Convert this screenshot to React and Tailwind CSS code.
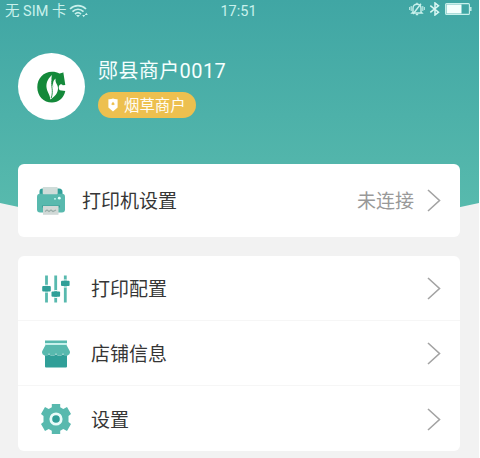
const TEAL = '#58b9ae';
const TEAL_DARK = '#309f98';

function WifiIcon() {
  return (
    <svg width="20" height="14" viewBox="0 0 20 14" fill="none" stroke="#c9f1ec" strokeWidth="1.700">
      <path d="M1 5C5.500 .6 12.500 .6 17 5" />
      <path d="M3.500 7.700C6.800 4.500 11.200 4.500 14.500 7.700" />
      <path d="M6 10.100C7.800 8.400 10.200 8.400 12 10.100" />
      <path d="M7 11L9 13.200l2-2.200z" fill="#c9f1ec" stroke="none" />
      <path d="M13.200 11l1.500 2.200 1.500-2.200zM15.800 11l1.500-2.200 1.500 2.200z" fill="#c9f1ec" stroke="none" />
    </svg>
  );
}

function MutedBellIcon() {
  return (
    <svg width="16" height="14" viewBox="0 0 16 14" fill="none" stroke="#c9f1ec" strokeWidth="1.400">
      <path d="M4 10V6.200C4 3.700 5.600 2.200 8 2.200s4 1.500 4 4V10l1 1H3z" />
      <path d="M8 .8v1.400M6.800 12.500h2.400M4 12L12 1.800" />
      <path d="M2.200 4v5M.7 5v3M13.800 4v5M15.300 5v3" strokeWidth="1" />
    </svg>
  );
}

function BluetoothIcon() {
  return (
    <svg width="12" height="14" viewBox="0 0 12 14" fill="none" stroke="#d9f7f3" strokeWidth="1.500">
      <path d="M1.300 3.700l8.200 6.500L6 13V1l3.500 2.800-8.200 6.500" />
    </svg>
  );
}

function BatteryIcon() {
  return (
    <svg width="27" height="12" viewBox="0 0 27 12" fill="none">
      <rect x=".6" y=".6" width="23.800" height="10.800" rx="1" stroke="#c9f1ec" strokeWidth="1.100" />
      <rect x="1.500" y="1.500" width="15" height="9" fill="#f4fffd" />
      <path d="M25.800 4v4" stroke="#c9f1ec" strokeWidth="1.400" />
    </svg>
  );
}

function MerchantLogo() {
  return (
    <svg width="30" height="32" viewBox="0 0 30 32">
      <path
        d="M26.300 1.200L28.300 14L25.800 14.300C24.800 12.800 23.200 13 22.200 14.500C21.400 16.300 21.600 18 22.800 19.300L28.300 20C26.500 27.500 21.500 31.500 15 31.500C6.500 31.500.3 25 .3 16.200S6.500.7 15 .7C18 .7 20.500 1.300 22.300 2.400C23.800 2.500 25 1.900 26.300 1.200z"
        fill="#14893a"
      />
      <path d="M14.800 4C10.300 8.500 8.800 12.500 9.700 17.500C10.500 21.500 13 23.500 13.300 28.500C17.500 26 21.200 22 21 17C20.800 13 17.800 12 18.600 7.500C15.500 10 16 13 16.300 16.500C15 13 13.800 9 14.800 4z" fill="#fff" />
      <path d="M15 9.500C13.500 15 17 19 14.200 27" fill="none" stroke="#14893a" strokeWidth=".9" />
    </svg>
  );
}

function ShieldIcon() {
  return (
    <svg width="10" height="14" viewBox="0 0 10 14">
      <path d="M.4 1.200C2.300 1.300 3.700 1 5 .4c1.300.6 2.700.9 4.600.8v8.300L5 13.500.4 9.500z" fill="#fff" />
      <path d="M5 3.700l1.900 2.600L5 7.200l-1.900-.9z" fill="#edc04f" />
    </svg>
  );
}

function PrinterIcon() {
  return (
    <svg width="28" height="28" viewBox="0 0 28 28">
      <path d="M2.500 9V4.500Q2.500 1.500 5.500 1.500H22Q25.500 1.500 25.500 5V9z" fill={TEAL_DARK} />
      <rect x="0" y="6.700" width="28" height="18.800" rx="3" fill={TEAL} />
      <rect x="5.700" y="0" width="15" height="7.200" rx="1" fill="#cfdcd9" />
      <circle cx="18" cy="11.800" r=".9" fill="#d6fffb" />
      <circle cx="22.300" cy="11.200" r="1.400" fill="#e4fffb" />
      <path d="M5 18.500H23V20.500H5z" fill="#3b9c96" />
      <rect x="6" y="19" width="15.500" height="8.800" fill="#d1d9d7" />
      <path d="M8 24.500l2-1.500 2 1.500 2-1.500 2 1.500 3-1.500" fill="none" stroke="#9bada9" strokeWidth="1.300" />
    </svg>
  );
}

function SlidersIcon() {
  return (
    <svg width="28" height="28" viewBox="0 0 28 28">
      <path d="M4.500 .5v27M13.700 .5v27M23.300 .5v27" stroke={TEAL} strokeWidth="2.800" />
      <path d="M3 10.300h3M3 17h3M12.200 15.600h3M12.200 22.400h3M21.800 5h3M21.800 12h3" stroke="#fff" strokeWidth="1" />
      <rect x=".2" y="11" width="8.600" height="5.400" rx="1" fill={TEAL_DARK} />
      <rect x="9.500" y="16.400" width="8.600" height="5.400" rx="1" fill={TEAL_DARK} />
      <rect x="19" y="5.700" width="8.600" height="5.400" rx="1" fill={TEAL_DARK} />
    </svg>
  );
}

function ShopIcon() {
  return (
    <svg width="28" height="28" viewBox="0 0 28 28">
      <rect x="3" y=".5" width="22" height="2.600" fill={TEAL} />
      <path d="M3 3.100H25V5H3z" fill="#c4f0ea" />
      <path d="M3.500 5H24.500L27.700 11A3.500 3.500 0 0 1 21 13.300A3.700 3.700 0 0 1 14 13.300A3.700 3.700 0 0 1 7 13.300A3.500 3.500 0 0 1 .3 11z" fill={TEAL} />
      <path d="M3 15.600Q5.500 15.800 7 14.200Q10.500 17.500 14 14.200Q17.500 17.500 21 14.200Q22.500 15.800 25 15.600V26.500Q25 27.500 24 27.500H4Q3 27.500 3 26.500z" fill={TEAL_DARK} />
    </svg>
  );
}

function GearIcon() {
  return (
    <svg width="30" height="30" viewBox="0 0 30 30">
      <path
        d="M10.800 0H19.200V3.300L22.300 5L26 3L30 10L27.500 12V18L30 20L26 27L22.300 25L19.200 26.700V30H10.800V26.700L7.700 25L4 27L0 20L2.500 18V12L0 10L4 3L7.700 5L10.800 3.300z"
        fill={TEAL}
      />
      <circle cx="15" cy="15" r="5.200" fill={TEAL_DARK} stroke="#e9fbf9" strokeWidth="2.800" />
    </svg>
  );
}

function ChevronIcon() {
  return (
    <svg width="14" height="23" viewBox="0 0 14 23" fill="none" stroke="#a3a3a3" strokeWidth="1.600">
      <path d="M1 1L12.500 11.500L1 22" />
    </svg>
  );
}

const MENU = [
  { label: '打印配置', Icon: SlidersIcon },
  { label: '店铺信息', Icon: ShopIcon },
  { label: '设置', Icon: GearIcon },
];

export default function App() {
  return (
    <div className="relative h-[458px] w-[479px] overflow-hidden bg-[#f2f2f2] font-['Roboto','Noto_Sans_CJK_SC',sans-serif] text-[#363636]">
      {/* Curved header backdrop */}
      <svg className="absolute top-0 left-0" width="479" height="240" viewBox="0 0 479 240">
        <defs>
          <linearGradient id="header" x1="0" y1="0" x2="0" y2="1">
            <stop offset="0" stopColor="#40a6a4" />
            <stop offset="1" stopColor="#5abcae" />
          </linearGradient>
        </defs>
        <path d="M0 0H479V203Q240 258 0 203z" fill="url(#header)" />
      </svg>

      <div className="relative">
        {/* Status bar */}
        <div className="grid h-5 grid-cols-3 items-center pr-[7px] pl-[5px] text-[14.5px] leading-5 text-[#c9f1ec]">
          <div className="flex items-center gap-[3px] whitespace-nowrap">
            <span className="pt-0.5">无 SIM 卡</span>
            <WifiIcon />
          </div>
          <span className="pt-px text-center">17:51</span>
          <div className="flex items-center justify-end gap-1 pb-1">
            <MutedBellIcon />
            <BluetoothIcon />
            <BatteryIcon />
          </div>
        </div>

        {/* Merchant */}
        <div className="flex h-36 items-start gap-[13px] px-[18px] pt-[33px]">
          <div className="flex size-[67px] items-center justify-center rounded-full bg-white pl-px">
            <MerchantLogo />
          </div>
          <div className="pt-1">
            <h1 className="text-[20px] leading-7 tracking-[0.4px] text-[#f5fffe]">郧县商户0017</h1>
            <div className="mt-[7px] flex h-[26px] w-[98px] items-center gap-1.5 rounded-full bg-[#edc04f] pl-2.5 text-[15.4px] leading-none whitespace-nowrap text-[#fffdf4]">
              <ShieldIcon />
              <span className="pt-[3px]">烟草商户</span>
            </div>
          </div>
        </div>

        {/* Printer */}
        <div className="mx-[18px] flex h-[73px] w-[442px] items-center rounded-md bg-white pr-[19px] pl-[19px] text-[19px]">
          <PrinterIcon />
          <span className="ml-[17px] flex-1 pt-[3px]">打印机设置</span>
          <span className="mr-[13px] pt-1 text-[#999999]">未连接</span>
          <ChevronIcon />
        </div>

        {/* Menu */}
        <div className="mx-[18px] mt-[19px] w-[442px] divide-y divide-[#f6f6f6] rounded-md bg-white text-[19px]">
          {MENU.map(({ label, Icon }) => (
            <div key={label} className="flex h-[65px] items-center pt-px pr-[19px] pl-[22px]">
              <div className="flex w-8 justify-center">
                <Icon />
              </div>
              <span className="ml-[19px] flex-1 pt-1">{label}</span>
              <ChevronIcon />
            </div>
          ))}
        </div>
      </div>
    </div>
  );
}
